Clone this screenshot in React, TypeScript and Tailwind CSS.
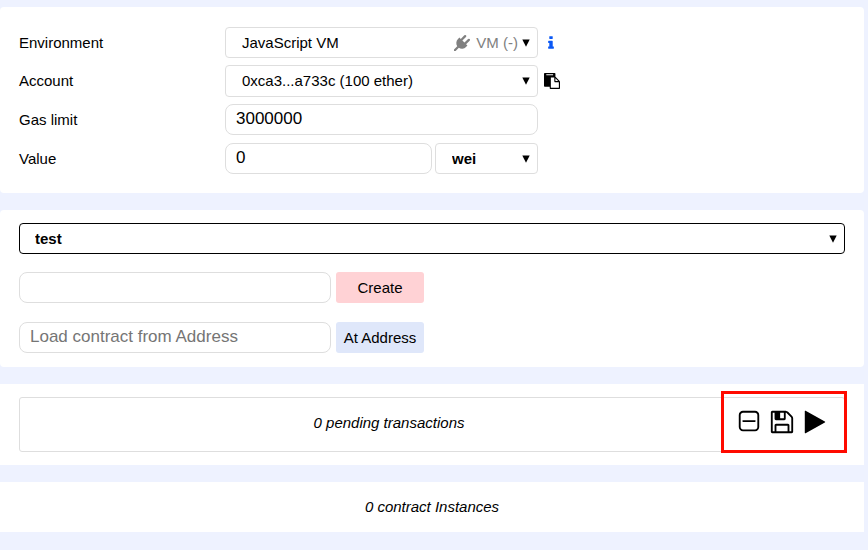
import { useState } from "react";
import type { ReactNode } from "react";

const fieldClass =
  "h-[31px] min-w-0 rounded-lg border border-[#dedede] bg-white px-2.5 pb-0.5 text-[17px] leading-5 text-black placeholder:text-[#757575]";

const paths = {
  plug: "M1755 453q37 38 37 90.5t-37 90.5l-401 400 150 150-160 160q-163 163-389.5 186.5t-411.5-100.5l-362 362h-181v-181l362-362q-124-185-100.5-411.5t186.5-389.5l160-160 150 150 400-401q38-37 91-37t90 37 37 90.5-37 90.5l-400 401 234 234 401-400q38-37 91-37t90 37z",
  info: "M1216 1344v128q0 26-19 45t-45 19h-512q-26 0-45-19t-19-45v-128q0-26 19-45t45-19h64v-384h-64q-26 0-45-19t-19-45v-128q0-26 19-45t45-19h384q26 0 45 19t19 45v576h64q26 0 45 19t19 45zm-128-1152v192q0 26-19 45t-45 19h-256q-26 0-45-19t-19-45v-192q0-26 19-45t45-19h256q26 0 45 19t19 45z",
  copy: "M768 1664h896v-640h-416q-40 0-68-28t-28-68v-416h-384v1152zm256-1440v-64q0-13-9.5-22.5t-22.5-9.5h-704q-13 0-22.5 9.5t-9.5 22.5v64q0 13 9.5 22.5t22.5 9.5h704q13 0 22.5-9.5t9.5-22.5zm256 672h299l-299-299v299zm512 128v672q0 40-28 68t-68 28h-960q-40 0-68-28t-28-68v-160h-544q-40 0-68-28t-28-68v-1344q0-40 28-68t68-28h1088q40 0 68 28t28 68v328q21 13 36 28l408 408q28 28 48 76t20 88z",
  minus:
    "M1344 800v64q0 14-9 23t-23 9h-832q-14 0-23-9t-9-23v-64q0-14 9-23t23-9h832q14 0 23 9t9 23zm128 448v-832q0-66-47-113t-113-47h-832q-66 0-113 47t-47 113v832q0 66 47 113t113 47h832q66 0 113-47t47-113zm128-832v832q0 119-84.5 203.5t-203.5 84.5h-832q-119 0-203.5-84.5t-84.5-203.5v-832q0-119 84.5-203.5t203.5-84.5h832q119 0 203.5 84.5t84.5 203.5z",
  save: "M512 1536h768v-384h-768v384zm896 0h128v-896q0-14-10-38.5t-20-34.5l-281-281q-10-10-34-20t-39-10v416q0 40-28 68t-68 28h-576q-40 0-68-28t-28-68v-416h-128v1280h128v-416q0-40 28-68t68-28h832q40 0 68 28t28 68v416zm-384-928v-320q0-13-9.5-22.5t-22.5-9.5h-192q-13 0-22.5 9.5t-9.5 22.5v320q0 13 9.5 22.5t22.5 9.5h192q13 0 22.5-9.5t9.5-22.5zm640 32v928q0 40-28 68t-68 28h-1344q-40 0-68-28t-28-68v-1344q0-40 28-68t68-28h928q40 0 88 20t76 48l280 280q28 28 48 76t20 88z M560 288h208v352h-208z",
  play: "M1576 927l-1328 738q-23 13-39.5 3t-16.5-36v-1472q0-26 16.5-36t39.5 3l1328 738q23 13 23 31t-23 31z",
};

function Icon({ name, className }: { name: keyof typeof paths; className: string }) {
  return (
    <svg viewBox="0 0 1792 1792" fill="currentColor" aria-hidden="true" className={className}>
      <path d={paths[name]} />
    </svg>
  );
}

type SelectProps = {
  id?: string;
  label?: string;
  options: string[];
  className: string;
  selectClass: string;
  hint?: ReactNode;
};

function Select({ id, label, options, className, selectClass, hint }: SelectProps) {
  return (
    <div className={`grid ${className}`}>
      <select
        id={id}
        aria-label={label}
        className={`col-start-1 row-start-1 w-full appearance-none rounded-sm border bg-white text-[15px] text-black ${selectClass}`}
      >
        {options.map((o) => (
          <option key={o}>{o}</option>
        ))}
      </select>
      <div className="pointer-events-none col-start-1 row-start-1 flex items-center gap-1 self-center justify-self-end pr-2">
        {hint}
        <svg viewBox="0 0 8 8" className="size-2" aria-hidden="true">
          <path d="M0.3 0.5h7.4L4 7.7z" />
        </svg>
      </div>
    </div>
  );
}

function Row({ id, label, className = "", children }: { id: string; label: string; className?: string; children: ReactNode }) {
  return (
    <div className={`flex items-center ${className}`}>
      <label htmlFor={id} className="w-[206px] shrink-0">
        {label}
      </label>
      {children}
    </div>
  );
}

export default function App() {
  const [gas, setGas] = useState("3000000");
  const [value, setValue] = useState("0");

  return (
    <main className="flex min-h-screen flex-col gap-[17px] bg-[#eef2ff] py-[7px] pr-1 font-['Liberation_Sans',Arial,sans-serif] text-[15px] leading-5 text-black">
      <section className="flex flex-col gap-[7px] rounded-sm bg-white px-[19px] pt-5 pb-[19px]">
        <Row id="environment" label="Environment">
          <Select
            id="environment"
            options={["JavaScript VM"]}
            className="w-[313px]"
            selectClass="h-[31px] border-[#dedede] pl-4"
            hint={
              <span className="flex items-center gap-1.5 text-[#808080]">
                <Icon name="plug" className="size-4" />
                VM (-)
              </span>
            }
          />
          <button type="button" aria-label="Environment details" className="ml-[5px] text-[#0a58f5]">
            <Icon name="info" className="size-4" />
          </button>
        </Row>
        <Row id="account" label="Account">
          <Select
            id="account"
            options={["0xca3...a733c (100 ether)"]}
            className="w-[313px]"
            selectClass="h-8 border-[#dedede] pl-4"
          />
          <button type="button" aria-label="Copy account address" className="ml-1.5">
            <Icon name="copy" className="size-4" />
          </button>
        </Row>
        <Row id="gas" label="Gas limit" className="pb-px">
          <input id="gas" value={gas} onChange={(e) => setGas(e.target.value)} className={`${fieldClass} w-[313px]`} />
        </Row>
        <Row id="value" label="Value">
          <div className="flex w-[313px] gap-[3px]">
            <input id="value" value={value} onChange={(e) => setValue(e.target.value)} className={`${fieldClass} flex-1`} />
            <Select
              label="Unit"
              options={["wei", "gwei", "finney", "ether"]}
              className="w-[103px]"
              selectClass="h-[31px] border-[#dedede] pl-4 font-bold"
            />
          </div>
        </Row>
      </section>

      <section className="rounded-sm bg-white px-[19px] pt-[13px] pb-3.5">
        <Select
          label="Contract"
          options={["test"]}
          className="w-full"
          selectClass="h-[31px] border-black pl-[15px] font-bold"
        />
        <div className="mt-[18px] flex gap-[5px]">
          <input aria-label="Constructor arguments" className={`${fieldClass} w-[312px]`} />
          <button type="button" className="h-[31px] w-[88px] rounded-[3px] bg-[#ffd2d5]">
            Create
          </button>
        </div>
        <div className="mt-[19px] flex gap-[5px]">
          <input
            aria-label="Load contract from Address"
            placeholder="Load contract from Address"
            className={`${fieldClass} w-[312px]`}
          />
          <button type="button" className="h-[31px] w-[88px] rounded-[3px] bg-[#dfe7fa]">
            At Address
          </button>
        </div>
      </section>

      <section className="bg-white px-[19px] py-[13px]">
        <div className="relative flex h-[55px] items-center rounded-[3px] border border-[#dedede] pr-4 pb-1.5 pl-[22px]">
          <p className="flex-1 pt-0.5 text-center italic">0 pending transactions</p>
          <div className="flex gap-[7px]">
            <button type="button" aria-label="Clear transactions">
              <Icon name="minus" className="size-[26px]" />
            </button>
            <button type="button" aria-label="Save transactions">
              <Icon name="save" className="size-[26px]" />
            </button>
            <button type="button" aria-label="Run transactions">
              <Icon name="play" className="size-[26px]" />
            </button>
          </div>
          <div className="pointer-events-none absolute -top-[7px] -right-[3px] h-[62px] w-[126px] border-3 border-[#ff0a00]" />
        </div>
      </section>

      <section className="bg-white py-[15px] text-center italic">0 contract Instances</section>
    </main>
  );
}
